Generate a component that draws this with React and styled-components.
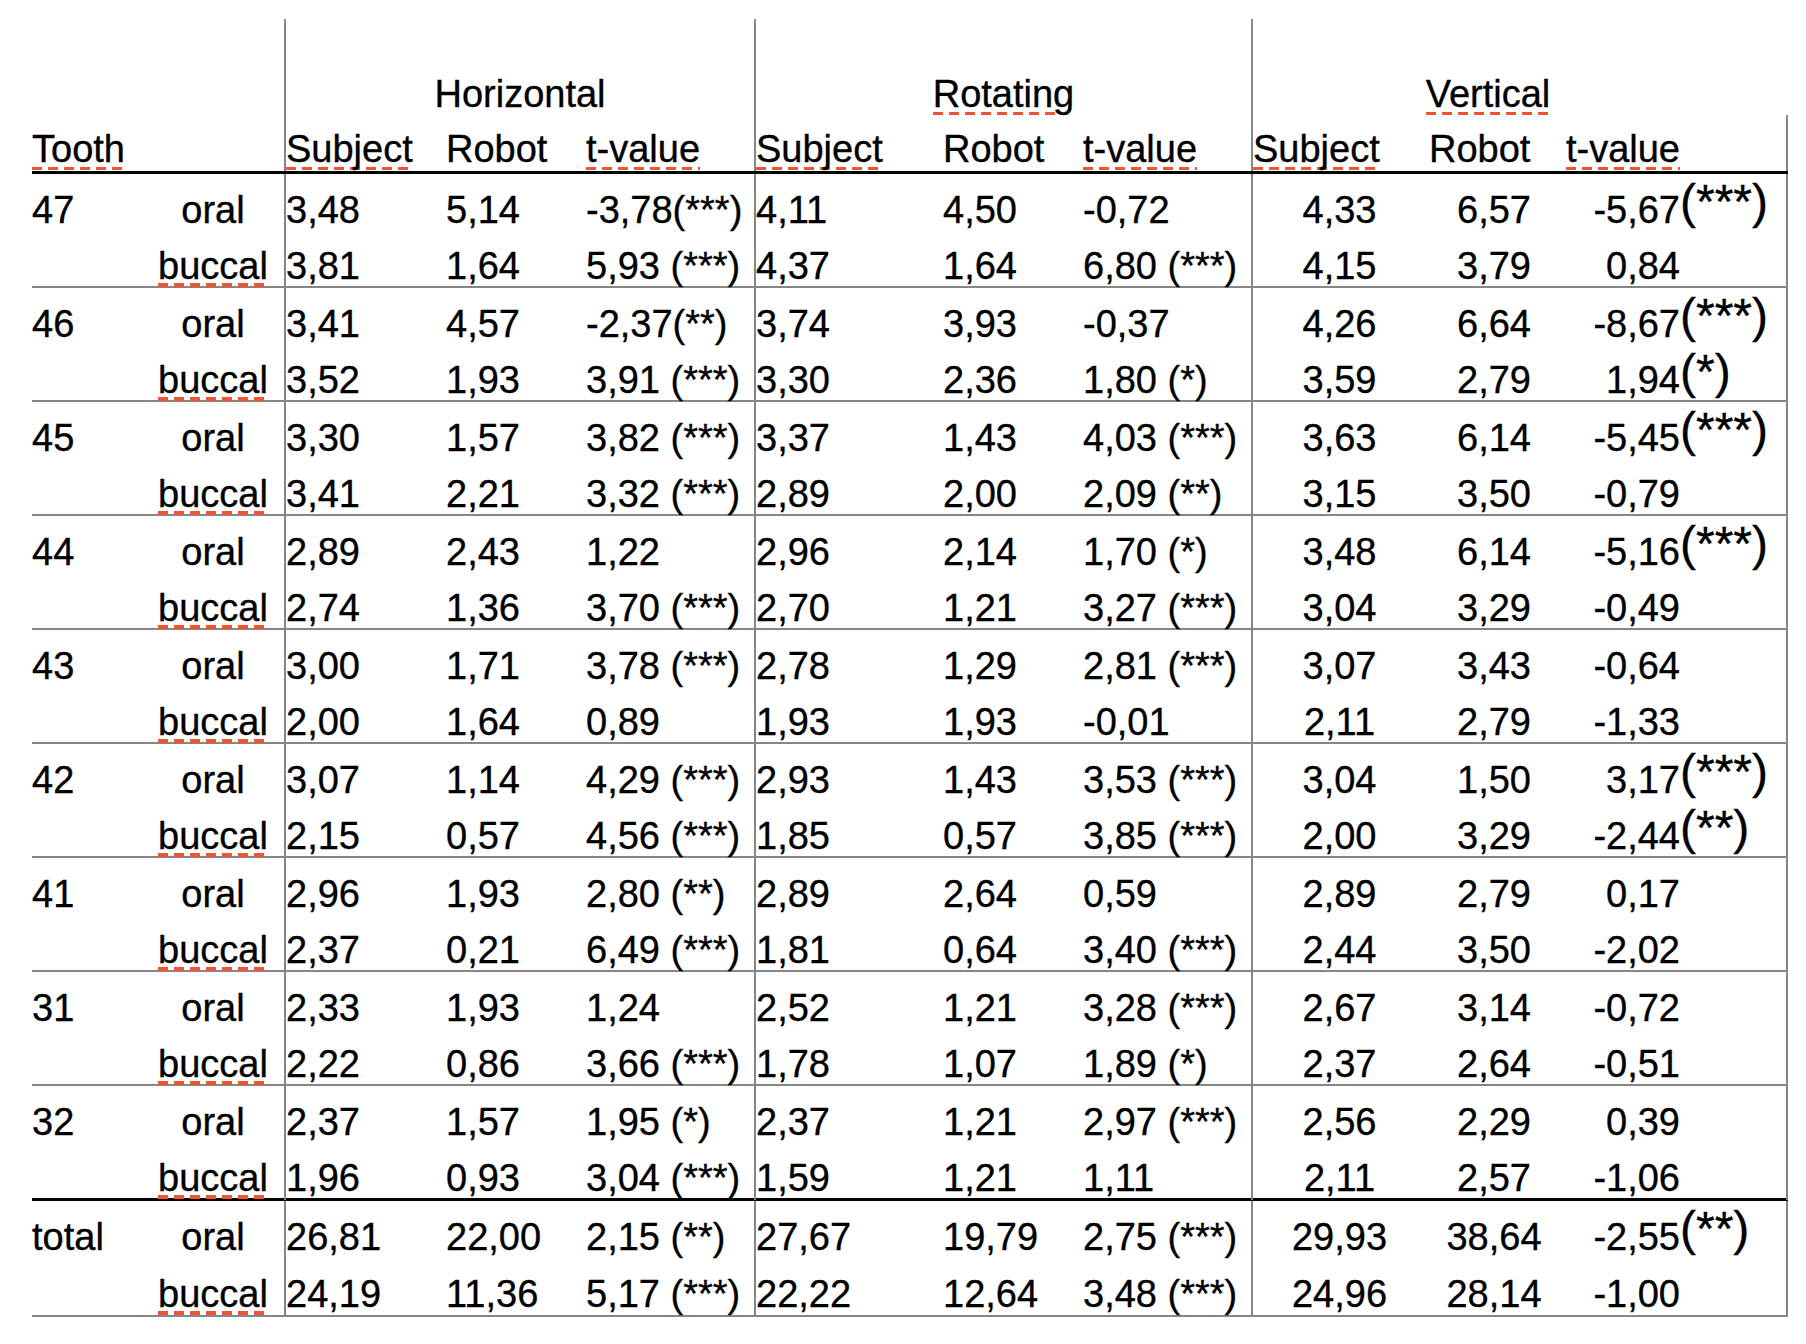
import React from 'react';
import styled, {createGlobalStyle} from 'styled-components';

const LINE = '#868686';
const SPELL = '#ef5532';
const COLS = '110px 142px 162px 140px 168px 189px 140px 168px 175px 136px 118px 108px';

const GlobalStyle = createGlobalStyle`
  html, body {
    margin: 0;
    background: #fff;
  }
  body {
    font-family: "Liberation Sans", Arial, sans-serif;
    color: #000;
  }
`;

const Sheet = styled.div`
  padding: 19px 0 30px 32px;
`;

const Table = styled.div`
  width: 1756px;
  font-size: 38px;
  line-height: 44px;
  -webkit-text-stroke: 0.35px #000;
`;

const rules = {
  none: 'none',
  thin: `2px solid ${LINE}`,
  thick: '3px solid #000'
};

const Row = styled.div`
  display: grid;
  grid-template-columns: ${COLS};
  height: ${props => props.$height}px;
  border-bottom: ${props => rules[props.$rule || 'none']};

  & > * {
    padding-top: ${props => props.$pad}px;
  }
`;

const Cell = styled.div`
  box-sizing: border-box;
  white-space: nowrap;
  text-align: ${props => props.$align || 'left'};
  padding-left: ${props => props.$inset || 0}px;
  border-left: ${props => (props.$divider ? `2px solid ${LINE}` : 'none')};
  border-right: ${props => (props.$edge ? `2px solid ${LINE}` : 'none')};
`;

const GroupTitle = styled(Cell)`
  grid-column: span ${props => props.$span};
  text-align: center;
  padding-right: ${props => props.$shift || 0}px;
`;

// red dashed spell-check mark under a word
const Spell = styled.span`
  background-image: repeating-linear-gradient(
    90deg,
    ${SPELL} 0 10px,
    transparent 10px 16px
  );
  background-repeat: no-repeat;
  background-size: ${props => props.$dashes * 16 - 6}px 4px;
  background-position: 0 38.5px;
`;

// bigger, raised significance stars in the Vertical block
const Mark = styled.span`
  font-size: 48px;
  line-height: 0;
  vertical-align: 5px;
`;

const data = [
  ['47', 'oral', '3,48|5,14|-3,78(***)', '4,11|4,50|-0,72', '4,33|6,57|-5,67|(***)'],
  ['', 'buccal', '3,81|1,64|5,93 (***)', '4,37|1,64|6,80 (***)', '4,15|3,79|0,84|'],
  ['46', 'oral', '3,41|4,57|-2,37(**)', '3,74|3,93|-0,37', '4,26|6,64|-8,67|(***)'],
  ['', 'buccal', '3,52|1,93|3,91 (***)', '3,30|2,36|1,80 (*)', '3,59|2,79|1,94|(*)'],
  ['45', 'oral', '3,30|1,57|3,82 (***)', '3,37|1,43|4,03 (***)', '3,63|6,14|-5,45|(***)'],
  ['', 'buccal', '3,41|2,21|3,32 (***)', '2,89|2,00|2,09 (**)', '3,15|3,50|-0,79|'],
  ['44', 'oral', '2,89|2,43|1,22', '2,96|2,14|1,70 (*)', '3,48|6,14|-5,16|(***)'],
  ['', 'buccal', '2,74|1,36|3,70 (***)', '2,70|1,21|3,27 (***)', '3,04|3,29|-0,49|'],
  ['43', 'oral', '3,00|1,71|3,78 (***)', '2,78|1,29|2,81 (***)', '3,07|3,43|-0,64|'],
  ['', 'buccal', '2,00|1,64|0,89', '1,93|1,93|-0,01', '2,11|2,79|-1,33|'],
  ['42', 'oral', '3,07|1,14|4,29 (***)', '2,93|1,43|3,53 (***)', '3,04|1,50|3,17|(***)'],
  ['', 'buccal', '2,15|0,57|4,56 (***)', '1,85|0,57|3,85 (***)', '2,00|3,29|-2,44|(**)'],
  ['41', 'oral', '2,96|1,93|2,80 (**)', '2,89|2,64|0,59', '2,89|2,79|0,17|'],
  ['', 'buccal', '2,37|0,21|6,49 (***)', '1,81|0,64|3,40 (***)', '2,44|3,50|-2,02|'],
  ['31', 'oral', '2,33|1,93|1,24', '2,52|1,21|3,28 (***)', '2,67|3,14|-0,72|'],
  ['', 'buccal', '2,22|0,86|3,66 (***)', '1,78|1,07|1,89 (*)', '2,37|2,64|-0,51|'],
  ['32', 'oral', '2,37|1,57|1,95 (*)', '2,37|1,21|2,97 (***)', '2,56|2,29|0,39|'],
  ['', 'buccal', '1,96|0,93|3,04 (***)', '1,59|1,21|1,11', '2,11|2,57|-1,06|'],
  ['total', 'oral', '26,81|22,00|2,15 (**)', '27,67|19,79|2,75 (***)', '29,93|38,64|-2,55|(**)'],
  ['', 'buccal', '24,19|11,36|5,17 (***)', '22,22|12,64|3,48 (***)', '24,96|28,14|-1,00|']
];

function ruleFor(index) {
  if (index % 2 === 0) return 'none';
  if (index === 17) return 'thick';
  return 'thin';
}

function DataRow({row, index}) {
  const [tooth, side, h, r, v] = row;
  const hv = h.split('|');
  const rv = r.split('|');
  const vv = v.split('|');
  const height = index >= 18 ? 57 : 56;

  return (
    <Row $height={height} $pad={13.5} $rule={ruleFor(index)}>
      <Cell>{tooth}</Cell>
      <Cell $align="center">
        {side === 'buccal' ? <Spell $dashes={7}>buccal</Spell> : side}
      </Cell>
      <Cell $divider>{hv[0]}</Cell>
      <Cell>{hv[1]}</Cell>
      <Cell>{hv[2]}</Cell>
      <Cell $divider>{rv[0]}</Cell>
      <Cell>{rv[1]}</Cell>
      <Cell>{rv[2]}</Cell>
      <Cell $divider $align="center">{vv[0]}</Cell>
      <Cell $align="center">{vv[1]}</Cell>
      <Cell $align="right">{vv[2]}</Cell>
      <Cell $edge>{vv[3] ? <Mark>{vv[3]}</Mark> : null}</Cell>
    </Row>
  );
}

export default function App() {
  return (
    <Sheet>
      <GlobalStyle />
      <Table>
        <Row $height={96} $pad={53}>
          <Cell />
          <Cell />
          <GroupTitle $divider $span={3}>Horizontal</GroupTitle>
          <GroupTitle $divider $span={3}>
            <Spell $dashes={8}>Rotating</Spell>
          </GroupTitle>
          <GroupTitle $divider $span={4} $shift={65}>
            <Spell $dashes={8}>Vertical</Spell>
          </GroupTitle>
        </Row>
        <Row $height={56} $pad={12} $rule="thick">
          <Cell>
            <Spell $dashes={6}>Tooth</Spell>
          </Cell>
          <Cell />
          <Cell $divider>
            <Spell $dashes={8}>Subject</Spell>
          </Cell>
          <Cell>Robot</Cell>
          <Cell>
            <Spell $dashes={8}>t-value</Spell>
          </Cell>
          <Cell $divider>
            <Spell $dashes={8}>Subject</Spell>
          </Cell>
          <Cell>Robot</Cell>
          <Cell>
            <Spell $dashes={8}>t-value</Spell>
          </Cell>
          <Cell $divider>
            <Spell $dashes={8}>Subject</Spell>
          </Cell>
          <Cell $inset={3}>Robot</Cell>
          <Cell $align="right">
            <Spell $dashes={8}>t-value</Spell>
          </Cell>
          <Cell $edge />
        </Row>
        {data.map((row, i) => (
          <DataRow key={i} row={row} index={i} />
        ))}
      </Table>
    </Sheet>
  );
}
